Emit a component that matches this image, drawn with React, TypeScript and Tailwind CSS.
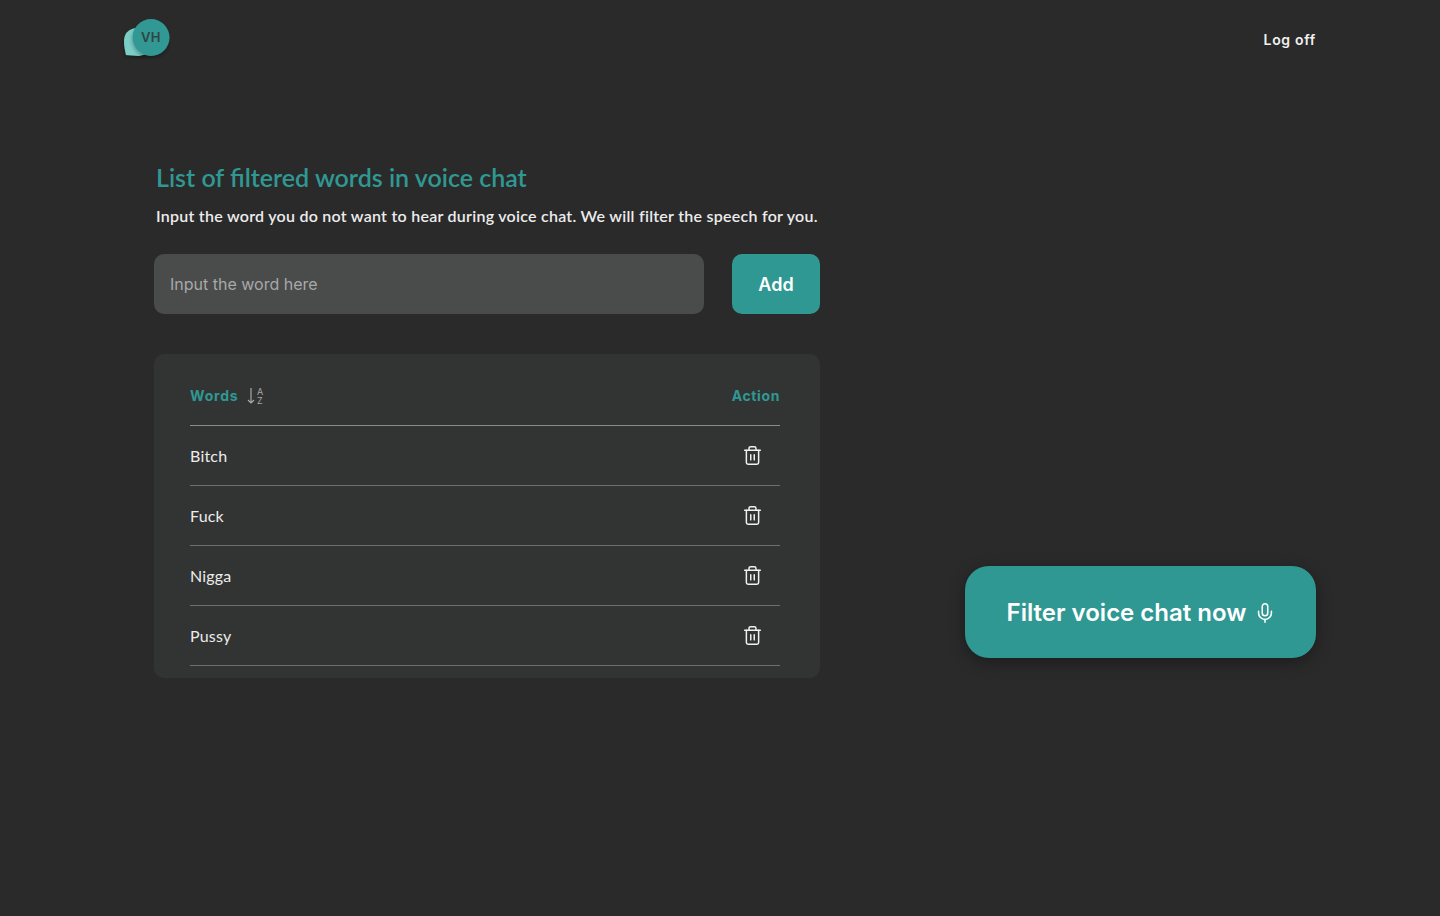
import { Mic, Trash2 } from "lucide-react";

const words = ["Bitch", "Fuck", "Nigga", "Pussy"];

const Logo = () => (
  <div className="relative w-[48px] h-[40px]">
    <svg width="48" height="40" viewBox="0 0 48 40" className="absolute left-0 top-0">
      <defs>
        <filter id="logo-shadow" x="-30%" y="-30%" width="160%" height="160%">
          <feDropShadow dx="0" dy="2" stdDeviation="2" floodColor="#000" floodOpacity="0.35" />
        </filter>
      </defs>
      <path d="M14 9C6 10 2 15 2 22c0 5 1 10 2 14l13 1 8-2z" fill="#7ccfc7" filter="url(#logo-shadow)" />
      <circle cx="29" cy="18.500" r="18.500" fill="#309893" filter="url(#logo-shadow)" />
    </svg>
    <span className="absolute left-[10px] top-0 w-[38px] h-[38px] flex items-center justify-center text-[13px] font-semibold tracking-[0.3px] text-[#2f4644] font-['Inter',sans-serif]">
      VH
    </span>
  </div>
);

export default function App() {
  return (
    <div className="min-h-[916px] bg-[#2a2a2a] font-['Lato',sans-serif] text-white">
      <header className="flex justify-between items-start pl-[122px] pr-[124px] pt-[19px]">
        <Logo />
        <button className="mt-[12px] text-[14px] leading-[18px] font-semibold tracking-[0.7px] text-[#f0f0f0] font-['Inter',sans-serif]">
          Log off
        </button>
      </header>

      <main className="flex justify-between items-start pl-[154px] pr-[124px] pt-[103px]">
        <section className="w-[666px]">
          <h1 className="pl-[2px] text-[25px] leading-[30px] font-semibold text-[#309893] whitespace-nowrap">
            List of filtered words in voice chat
          </h1>
          <p className="pl-[2px] mt-[14px] text-[16px] leading-[20px] font-semibold tracking-[0.26px] text-[#ececec] whitespace-nowrap">
            Input the word you do not want to hear during voice chat. We will filter the speech for you.
          </p>

          <div className="mt-[28px] flex justify-between">
            <input
              placeholder="Input the word here"
              className="w-[550px] h-[60px] rounded-[10px] bg-[#4a4c4b] px-4 text-[16px] font-['Inter',sans-serif] text-white placeholder:text-[#a8a8a8] outline-none"
            />
            <button className="w-[88px] h-[60px] rounded-[10px] bg-[#309893] text-[18px] font-semibold text-white font-['Inter',sans-serif]">
              Add
            </button>
          </div>

          <div className="mt-[40px] rounded-[10px] bg-[#323433] pl-[36px] pr-[40px] pb-[12px]">
            <div className="h-[72px] pt-[12px] flex items-center justify-between border-b border-[#8a8a8a] font-['Inter',sans-serif]">
              <div className="flex items-center gap-[9px]">
                <span className="text-[14px] font-bold tracking-[0.8px] text-[#309893]">Words</span>
                <svg width="17" height="18" viewBox="0 0 17 18" fill="none" stroke="#a8a8a8" strokeWidth="1.200">
                  <path d="M4 1v15M1 13l3 3 3-3" />
                  <text x="10" y="7.500" fontSize="9" fill="#a8a8a8" stroke="none">A</text>
                  <text x="10" y="16.500" fontSize="9" fill="#a8a8a8" stroke="none">Z</text>
                </svg>
              </div>
              <span className="text-[14px] font-bold tracking-[0.6px] text-[#309893]">Action</span>
            </div>
            {words.map((word) => (
              <div key={word} className="h-[60px] flex items-center justify-between border-b border-[#6d6e6d]">
                <span className="text-[16px] tracking-[0.2px] text-[#ececec]">{word}</span>
                <Trash2 size={21} strokeWidth={1.700} className="mr-[17px] text-[#f0f0f0]" />
              </div>
            ))}
          </div>
        </section>

        <button className="mt-[404px] w-[351px] h-[92px] pl-[2px] pt-[1px] rounded-[24px] bg-[#309893] shadow-[0_4px_16px_rgba(0,0,0,0.35)] flex items-center justify-center gap-[8px] text-[24px] font-semibold text-white font-['Inter',sans-serif]">
          Filter voice chat now
          <Mic size={22} strokeWidth={1.700} />
        </button>
      </main>
    </div>
  );
}
